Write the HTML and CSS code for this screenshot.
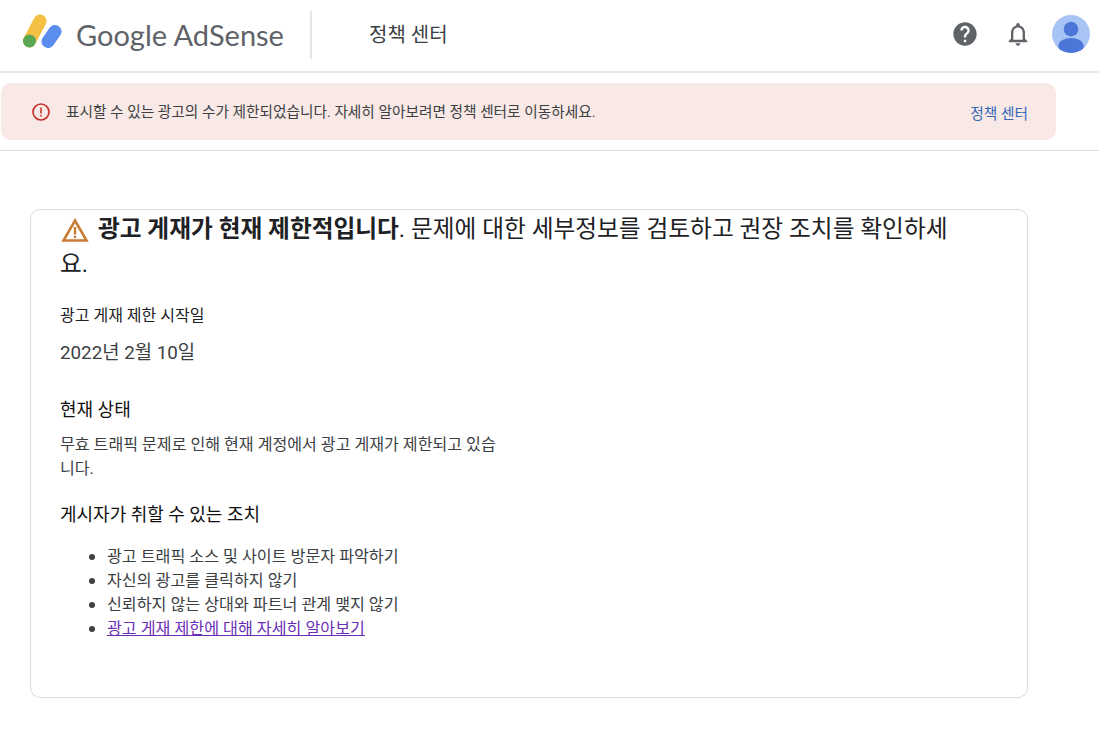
FILE: index.html
```html
<!DOCTYPE html>
<html lang="ko">
<head>
  <meta charset="UTF-8">
  <meta name="viewport" content="width=device-width, initial-scale=1.0">
  <title>Google AdSense - 정책 센터</title>
  <link rel="stylesheet" href="styles.css">
</head>
<body>
<header class="topbar">
  <div class="brand">
    <svg class="brand-mark" width="40" height="34" viewBox="0 0 40 34">
      <line x1="6.500" y1="27" x2="17" y2="7" stroke="#f4bf42" stroke-width="13" stroke-linecap="round"/>
      <line x1="32" y1="17.500" x2="25" y2="27.500" stroke="#5b8def" stroke-width="13" stroke-linecap="round"/>
      <circle cx="6.500" cy="27" r="6.500" fill="#5aa854"/>
    </svg>
    <span class="brand-name">Google AdSense</span>
  </div>
  <div class="topbar-title">정책 센터</div>
  <div class="topbar-icons">
    <svg class="icon-help" width="28" height="28" viewBox="0 0 24 24">
      <path fill="#5f6368" d="M12 2C6.480 2 2 6.480 2 12s4.480 10 10 10 10-4.480 10-10S17.520 2 12 2zm1 17h-2v-2h2v2zm2.070-7.750l-.9.920C13.450 12.900 13 13.500 13 15h-2v-.5c0-1.100.45-2.100 1.170-2.830l1.240-1.260c.37-.36.590-.86.590-1.410 0-1.100-.9-2-2-2s-2 .9-2 2H8c0-2.210 1.790-4 4-4s4 1.790 4 4c0 .88-.36 1.680-.93 2.250z"/>
    </svg>
    <svg class="icon-bell" width="28" height="28" viewBox="0 0 24 24">
      <path fill="#5f6368" d="M12 22c1.100 0 2-.9 2-2h-4c0 1.100.9 2 2 2zm6-6v-5c0-3.070-1.630-5.640-4.500-6.320V4c0-.83-.67-1.500-1.500-1.500s-1.500.67-1.500 1.500v.68C7.640 5.360 6 7.920 6 11v5l-2 2v1h16v-1l-2-2zm-2 1H8v-6c0-2.480 1.510-4.500 4-4.500s4 2.020 4 4.500v6z"/>
    </svg>
    <svg class="avatar" width="38" height="38" viewBox="0 0 39 39">
      <defs><clipPath id="avatar-clip"><circle cx="19.500" cy="19.500" r="19.500"/></clipPath></defs>
      <circle cx="19.500" cy="19.500" r="19.500" fill="#a8c4f5"/>
      <g clip-path="url(#avatar-clip)" fill="#4d76d9">
        <circle cx="19.500" cy="14.500" r="7.500"/>
        <ellipse cx="19.500" cy="32" rx="13" ry="8.500"/>
      </g>
    </svg>
  </div>
</header>

<section class="banner-row">
  <div class="banner">
    <svg class="banner-icon" width="20" height="20" viewBox="0 0 20 20">
      <circle cx="10" cy="10" r="8" fill="none" stroke="#c5352b" stroke-width="1.700"/>
      <rect x="9.200" y="5.500" width="1.600" height="6" fill="#c5352b"/>
      <rect x="9.200" y="12.800" width="1.600" height="1.700" fill="#c5352b"/>
    </svg>
    <p class="banner-text">표시할 수 있는 광고의 수가 제한되었습니다. 자세히 알아보려면 정책 센터로 이동하세요.</p>
    <a class="banner-link" href="#">정책 센터</a>
  </div>
</section>

<main class="content">
  <div class="card">
    <h1 class="headline">
      <svg class="warn-icon" width="28" height="26" viewBox="0 0 28 26">
        <path d="M14 3.500 L25.500 23.500 H2.500 Z" fill="none" stroke="#c97c35" stroke-width="2.600" stroke-linejoin="miter"/>
        <rect x="12.800" y="10" width="2.400" height="7.500" fill="#c97c35"/>
        <rect x="12.800" y="18.800" width="2.400" height="2.400" fill="#c97c35"/>
      </svg>
      <strong>광고 게재가 현재 제한적입니다</strong>. 문제에 대한 세부정보를 검토하고 권장 조치를 확인하세요.
    </h1>
    <div class="label">광고 게재 제한 시작일</div>
    <div class="date">2022년 2월 10일</div>
    <h2 class="section-title status-title">현재 상태</h2>
    <p class="status-text">무효 트래픽 문제로 인해 현재 계정에서 광고 게재가 제한되고 있습니다.</p>
    <h2 class="section-title">게시자가 취할 수 있는 조치</h2>
    <ul class="actions">
      <li>광고 트래픽 소스 및 사이트 방문자 파악하기</li>
      <li>자신의 광고를 클릭하지 않기</li>
      <li>신뢰하지 않는 상대와 파트너 관계 맺지 않기</li>
      <li><a href="#">광고 게재 제한에 대해 자세히 알아보기</a></li>
    </ul>
  </div>
</main>
</body>
</html>
```

FILE: styles.css
```css
* { box-sizing: border-box; }
body { margin: 0; background: #fff; color: #202124; font-family: Roboto, "Noto Sans CJK KR", sans-serif; }

.topbar { height: 73px; display: flex; align-items: center; border-bottom: 2px solid #e8e8e8; padding: 0 9px 2px 23px; }
.brand { width: 289px; height: 48px; display: flex; align-items: center; gap: 13px; border-right: 2px solid #e6e6e6; }
.brand-mark { flex: none; margin-top: -8px; }
.brand-name { font-family: Lato, sans-serif; font-size: 29px; color: #5f6368; white-space: nowrap; }
.topbar-title { margin: 0 0 3px 57px; font-size: 20px; color: #3c4043; }
.topbar-icons { margin: 0 0 2px auto; display: flex; align-items: center; }
.icon-help { margin-right: 25px; }
.icon-bell { margin-right: 20px; }

.banner-row { height: 78px; padding: 10px 0 0 1px; border-bottom: 1px solid #dadce0; }
.banner { width: 1055px; height: 57px; display: flex; align-items: center; background: #f8e8e6; border-radius: 10px; padding: 0 28px 0 30px; }
.banner-icon { flex: none; margin-right: 15px; }
.banner-text { margin: 0 0 3px; flex: 1; font-size: 14.670px; color: #3c4043; }
.banner-link { margin-top: 1px; font-size: 14.700px; color: #3367b8; text-decoration: none; }

.content { padding: 58px 71px 0 30px; }
.card { height: 489px; border: 1px solid #dadce0; border-radius: 10px; padding: 2px 75px 0 29px; }
.headline { margin: 0; font-size: 23.700px; line-height: 35px; font-weight: 400; color: #202124; }
.headline strong { font-weight: 700; }
.warn-icon { vertical-align: -6px; margin: 0 3px 0 1px; }
.label { margin-top: 22px; font-size: 16px; line-height: 24px; color: #202124; }
.date { margin-top: 12px; font-size: 18.800px; line-height: 26px; color: #3c4043; }
.section-title { margin: 0; font-size: 18px; line-height: 26px; font-weight: 400; color: #111; }
.status-title { margin-top: 31px; }
.status-text { margin: 10px 0 0; width: 440px; font-size: 16.100px; line-height: 24px; color: #3c4043; }
.status-text + .section-title { margin-top: 21px; }
.actions { margin: 17px 0 0; padding-left: 29px; list-style: none; font-size: 16.170px; line-height: 24px; color: #3c4043; }
.actions li { display: flex; align-items: center; gap: 12px; }
.actions li::before { content: ""; width: 6px; height: 6px; border-radius: 50%; background: #3c4043; }
.actions a { color: #6b2fb5; }
```
